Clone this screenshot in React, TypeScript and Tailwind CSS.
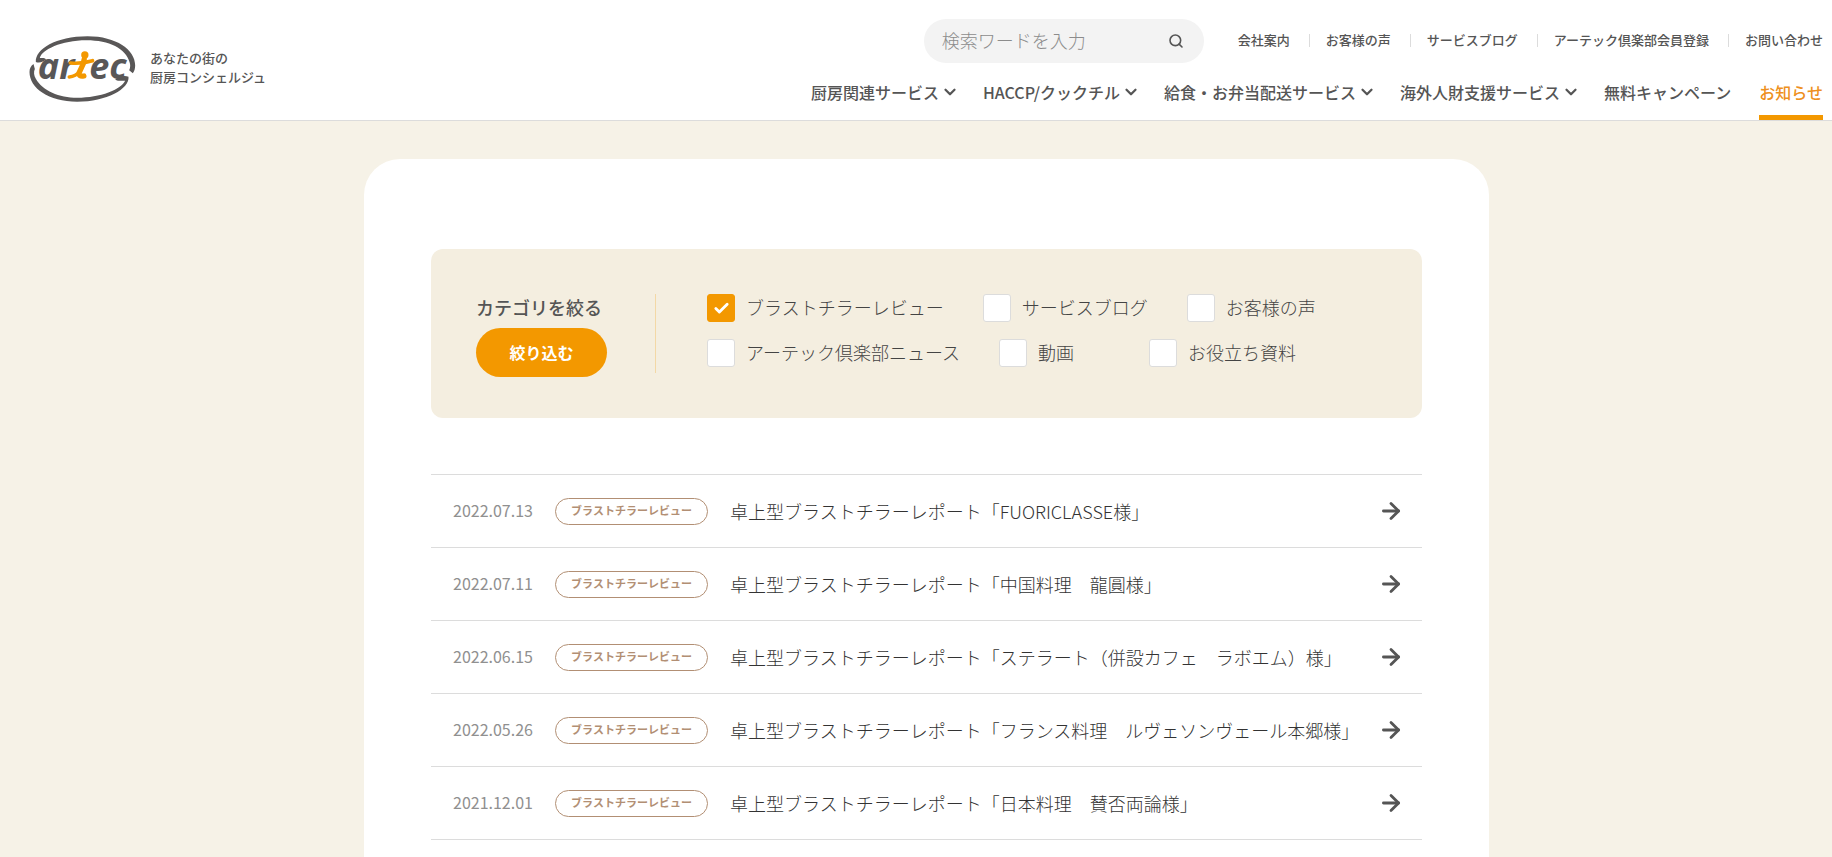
import React, { useState } from 'react';
import { ArrowRight, Check, ChevronDown, Search } from 'lucide-react';

const subLinks = ['会社案内', 'お客様の声', 'サービスブログ', 'アーテック倶楽部会員登録', 'お問い合わせ'];

const mainLinks = [
  { label: '厨房関連サービス', menu: true },
  { label: 'HACCP/クックチル', menu: true },
  { label: '給食・お弁当配送サービス', menu: true },
  { label: '海外人財支援サービス', menu: true },
  { label: '無料キャンペーン' },
  { label: 'お知らせ', active: true },
];

const categories = [
  'ブラストチラーレビュー',
  'サービスブログ',
  'お客様の声',
  'アーテック倶楽部ニュース',
  '動画',
  'お役立ち資料',
];

const news = [
  { date: '2022.07.13', title: '卓上型ブラストチラーレポート「FUORICLASSE様」' },
  { date: '2022.07.11', title: '卓上型ブラストチラーレポート「中国料理　龍圓様」' },
  { date: '2022.06.15', title: '卓上型ブラストチラーレポート「ステラート（併設カフェ　ラボエム）様」' },
  { date: '2022.05.26', title: '卓上型ブラストチラーレポート「フランス料理　ルヴェソンヴェール本郷様」' },
  { date: '2021.12.01', title: '卓上型ブラストチラーレポート「日本料理　賛否両論様」' },
];

function Logo() {
  return (
    <svg viewBox="0 0 320 198" className="h-[66px] w-[107px]" role="img" aria-label="artec">
      <g fill="#595757">
        {/* upper and lower halves of the ring */}
        <path d="M20 78 C18 40 80 1 175 1 C262 1 318 42 318 88 C318 98 316 106 311 112 L300 103 C304 94 304 86 301 78 C290 38 240 13 172 13 C96 13 38 42 32 66 C38 66 46 64 51 70 C44 78 30 82 20 78 Z" />
        <path d="M13 84 L17 99 C13 108 14 118 20 128 C40 164 90 185 144 185 C214 185 276 160 288 134 C278 134 268 136 258 131 C268 121 286 118 298 122 C302 158 232 197 144 197 C58 197 1 156 1 108 C1 98 5 90 13 84 Z" />
        <g className="font-['Open_Sans',sans-serif] font-bold italic" fontSize="108">
          <text x="26" y="129">ar</text>
          <text x="180" y="130">ec</text>
        </g>
      </g>
      <g stroke="#f39800" fill="none" strokeLinecap="round" strokeLinejoin="round">
        <circle cx="167" cy="57" r="11" fill="#f39800" stroke="none" />
        <path d="M124 81 Q158 84 190 74" strokeWidth="11" />
        <path d="M165 70 L162 84 L150 110 Q148 123 164 120" strokeWidth="16" />
        <path d="M152 106 Q140 122 120 123" strokeWidth="10" />
      </g>
    </svg>
  );
}

function Header() {
  return (
    <header className="flex justify-between border-b border-[#dcdcdc] bg-white pl-[29px] pr-[9px] text-[#555]">
      <a href="#" className="flex h-[120px] shrink-0 items-center gap-[14px] pt-[18px]">
        <Logo />
        <span className="-mt-1 text-[13px] font-medium leading-[19px]">
          あなたの街の
          <br />
          厨房コンシェルジュ
        </span>
      </a>

      <div className="flex flex-col items-end pt-[19px]">
        <div className="flex items-center gap-[34px]">
          <form className="flex h-11 w-[280px] items-center rounded-full bg-[#f3f3f3] pl-[18px] pr-5">
            <input
              type="text"
              aria-label="検索ワード"
              placeholder="検索ワードを入力"
              className="min-w-0 flex-1 bg-transparent pb-[2px] text-lg font-light outline-none placeholder:text-[#8c8c8c]"
            />
            <button type="button" aria-label="検索">
              <Search size={16} strokeWidth={2.4} />
            </button>
          </form>
          <ul className="flex items-center pb-[2px] text-[13px] font-medium leading-5">
            {subLinks.map((label, i) => (
              <li key={label} className="flex items-center">
                {i > 0 && <span className="ml-[19px] mr-4 h-[13px] w-px bg-[#dcdcdc]"></span>}
                <a href="#">{label}</a>
              </li>
            ))}
          </ul>
        </div>

        <nav className="flex h-[57px] gap-7 text-base font-medium">
          {mainLinks.map((item) => (
            <a
              key={item.label}
              href="#"
              className={
                item.active
                  ? 'flex items-center whitespace-nowrap border-b-[5px] border-[#f39800] pt-[5px] text-[#ee9020]'
                  : 'flex items-center gap-[2px] whitespace-nowrap'
              }
            >
              {item.label}
              {item.menu && <ChevronDown size={18} strokeWidth={3} className="-mr-1" />}
            </a>
          ))}
        </nav>
      </div>
    </header>
  );
}

function CategoryFilter() {
  const [selected, setSelected] = useState<string[]>([categories[0]]);

  const toggle = (name: string) => {
    setSelected((prev) => (prev.includes(name) ? prev.filter((c) => c !== name) : [...prev, name]));
  };

  return (
    <form className="flex items-start rounded-xl bg-[#f4eee0] px-[45px] pb-[41px] pt-[45px]">
      <div className="flex w-[131px] shrink-0 flex-col gap-[6px]">
        <h2 className="pb-[2px] text-lg font-medium leading-[26px]">カテゴリを絞る</h2>
        <button type="button" className="h-[49px] rounded-full bg-[#f39800] pb-[2px] text-base font-bold text-white">
          絞り込む
        </button>
      </div>
      <div className="ml-12 mr-[51px] h-[79px] w-px shrink-0 bg-[#f3d8a6]"></div>
      <div className="flex flex-wrap gap-x-[39px] gap-y-[17px]">
        {categories.map((name) => (
          <label key={name} className="flex min-w-[111px] items-center gap-[11px] text-lg font-light text-[#444]">
            <span className="grid place-items-center">
              <input
                type="checkbox"
                checked={selected.includes(name)}
                onChange={() => toggle(name)}
                className="col-start-1 row-start-1 size-7 appearance-none rounded-[3px] border border-[#dcdcdc] bg-white checked:border-[#f39800] checked:bg-[#f39800]"
              />
              {selected.includes(name) && (
                <Check size={17} strokeWidth={4} className="pointer-events-none col-start-1 row-start-1 text-white" />
              )}
            </span>
            <span className="pb-[2px] leading-[26px]">{name}</span>
          </label>
        ))}
      </div>
    </form>
  );
}

function NewsList() {
  return (
    <ul className="mt-14 border-t border-[#dcdcdc]">
      {news.map((item) => (
        <li key={item.date} className="border-b border-[#dcdcdc]">
          <a href="#" className="flex h-[72px] items-center pl-[22px] pr-[18px]">
            <time className="w-[102px] shrink-0 pb-[3px] text-base text-[#909090]">{item.date}</time>
            <span className="mr-[22px] flex h-[27px] w-[153px] shrink-0 items-center justify-center rounded-full border border-[#b28f74] pb-px text-[11px] font-bold text-[#b28f74]">
              ブラストチラーレビュー
            </span>
            <span className="flex-1 text-lg font-light text-[#333]">{item.title}</span>
            <ArrowRight size={26} strokeWidth={2.6} />
          </a>
        </li>
      ))}
    </ul>
  );
}

export default function App() {
  return (
    <div className="min-h-screen bg-[#f6f2e7] font-['Noto_Sans_CJK_JP',sans-serif] text-[#555]" lang="ja">
      <Header />
      <main className="flex justify-center pl-[21px] pt-[38px]">
        <div className="w-full max-w-[1125px] rounded-t-[36px] bg-white px-[67px] pb-24 pt-[90px]">
          <CategoryFilter />
          <NewsList />
        </div>
      </main>
    </div>
  );
}
